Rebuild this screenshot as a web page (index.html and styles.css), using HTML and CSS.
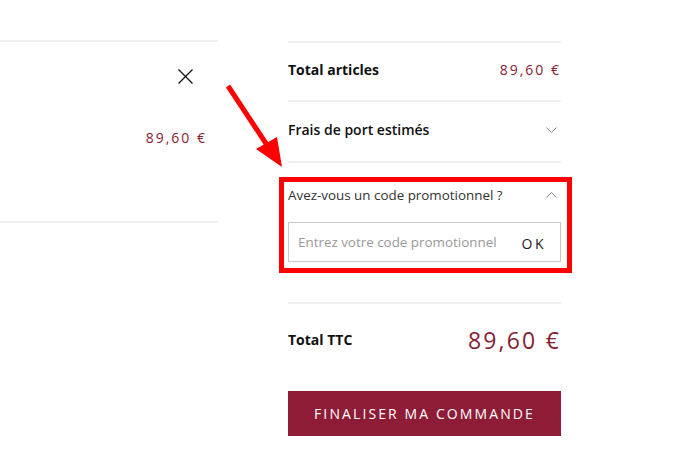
FILE: index.html
```html
<!DOCTYPE html>
<html lang="fr">
<head>
<meta charset="utf-8">
<title>Panier</title>
<link rel="stylesheet" href="styles.css">
</head>
<body>
<div class="page">
  <section class="item">
    <button class="close" aria-label="Supprimer">
      <svg width="15" height="15" viewBox="0 0 15 15"><path d="M0.5 0.5 L14.5 14.5 M14.5 0.5 L0.5 14.5" stroke="#111" stroke-width="1.3" fill="none"/></svg>
    </button>
    <div class="price">89,60 €</div>
  </section>

  <aside class="summary">
    <div class="row row-first">
      <span class="label">Total articles</span>
      <span class="price">89,60 €</span>
    </div>
    <div class="row row-ship">
      <span class="label">Frais de port estimés</span>
      <svg class="chev" width="11" height="6" viewBox="0 0 11 6"><path d="M0.5 0.5 L5.5 5.5 L10.5 0.5" stroke="#8a8a8a" stroke-width="1" fill="none"/></svg>
    </div>
    <div class="promo">
      <div class="promo-head">
        <span class="promo-title">Avez-vous un code promotionnel ?</span>
        <svg class="chev" width="11" height="6" viewBox="0 0 11 6"><path d="M0.5 5.5 L5.5 0.5 L10.5 5.5" stroke="#8a8a8a" stroke-width="1" fill="none"/></svg>
      </div>
      <div class="promo-field">
        <span class="placeholder">Entrez votre code promotionnel</span>
        <span class="ok">OK</span>
      </div>
    </div>
    <div class="total">
      <span class="label">Total TTC</span>
      <span class="big-price">89,60 €</span>
    </div>
    <button class="checkout">FINALISER MA COMMANDE</button>
  </aside>

  <div class="highlight"></div>
  <svg class="arrow" width="679" height="449" viewBox="0 0 679 449">
    <line x1="228" y1="86" x2="267" y2="145" stroke="#ff0000" stroke-width="5"/>
    <polygon points="256,149 277,137 282,167" fill="#ff0000"/>
  </svg>
</div>
</body>
</html>
```

FILE: styles.css
```css
* { box-sizing: border-box; }
html, body { margin: 0; padding: 0; background: #fff; }
body {
  font-family: "Open Sans", "Liberation Sans", sans-serif;
  font-size: 14px;
  color: #222;
}
.page {
  position: relative;
  width: 679px;
  height: 449px;
  display: flex;
  align-items: flex-start;
  padding-top: 40px;
}
.item {
  width: 218px;
  height: 183px;
  border-top: 2px solid #f0f0f0;
  border-bottom: 2px solid #f0f0f0;
  display: flex;
  flex-direction: column;
  align-items: flex-end;
}
.close {
  border: 0;
  background: none;
  padding: 0;
  width: 15px;
  height: 15px;
  margin-top: 27px;
  margin-right: 25px;
  display: block;
}
.close svg { display: block; }
.price {
  color: #862133;
  font-size: 14px;
  letter-spacing: 2px;
  line-height: 20px;
}
.item .price { margin-top: 44px; margin-right: 11px; }

.summary {
  width: 273px;
  margin-left: 70px;
  margin-top: 1px;
}
.row {
  border-top: 2px solid #f0f0f0;
  display: flex;
  justify-content: space-between;
  align-items: center;
  line-height: 20px;
}
.row-first { height: 59px; padding: 17px 0 20px; }
.row-ship { height: 61px; padding: 18px 0 21px; }
.label { font-weight: 700; color: #111; }
.row-ship .label { font-weight: 600; }
.chev { display: block; margin-right: 4px; }

.promo {
  border-top: 2px solid #f0f0f0;
  padding: 22px 0 40px;
}
.promo-head {
  display: flex;
  justify-content: space-between;
  align-items: center;
  line-height: 20px;
}
.promo-title { color: #333; font-size: 13.4px; }
.promo-field {
  margin-top: 17px;
  height: 40px;
  border: 1px solid #c8c8c8;
  display: flex;
  align-items: center;
  justify-content: space-between;
  padding: 0 14px 0 9px;
}
.placeholder { color: #999; font-size: 13.4px; }
.ok { color: #222; letter-spacing: 2.5px; font-size: 14px; margin-top: 2px; }

.total {
  border-top: 2px solid #f0f0f0;
  padding-top: 22px;
  height: 52px;
  display: flex;
  justify-content: space-between;
  align-items: center;
}
.total .label { line-height: 28px; }
.big-price {
  color: #862133;
  font-size: 23px;
  letter-spacing: 2.2px;
  line-height: 28px;
}
.checkout {
  display: block;
  margin-top: 37px;
  width: 273px;
  height: 45px;
  border: 0;
  background: #8e1c37;
  color: #fff;
  font-family: "Open Sans", "Liberation Sans", sans-serif;
  font-size: 14px;
  letter-spacing: 2.1px;
  padding: 0;
}

.highlight {
  position: absolute;
  left: 279px;
  top: 177px;
  width: 293px;
  height: 96px;
  border: 5px solid #ff0000;
  pointer-events: none;
}
.arrow {
  position: absolute;
  left: 0;
  top: 0;
  pointer-events: none;
}
```
